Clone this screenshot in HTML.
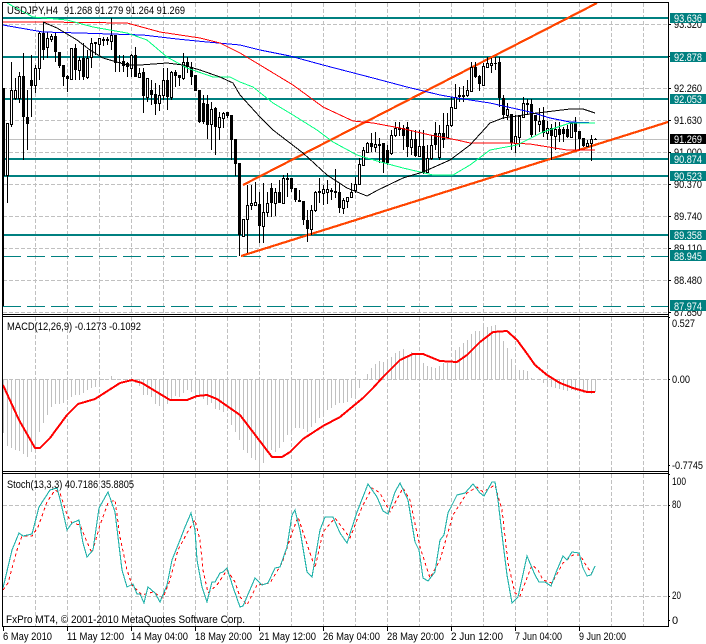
<!DOCTYPE html>
<html><head><meta charset="utf-8"><title>USDJPY,H4</title>
<style>
html,body{margin:0;padding:0;background:#fff;width:706px;height:644px;overflow:hidden}
svg{display:block}
text{font-family:"Liberation Sans",sans-serif;font-size:11px;fill:#000}
.c{shape-rendering:crispEdges}
</style></head><body>
<svg width="706" height="644" viewBox="0 0 706 644" xmlns="http://www.w3.org/2000/svg">
<rect width="706" height="644" fill="#fff"/>
<g class="c" fill="none">
<!-- grid -->
<path stroke="#c0c0c0" stroke-dasharray="4 2" d="M35.5 3V314M67.5 3V314M99.5 3V314M131.5 3V314M163.5 3V314M195.5 3V314M227.5 3V314M259.5 3V314M291.5 3V314M323.5 3V314M355.5 3V314M387.5 3V314M419.5 3V314M451.5 3V314M483.5 3V314M515.5 3V314M547.5 3V314M579.5 3V314M611.5 3V314M643.5 3V314
M35.5 317V471M67.5 317V471M99.5 317V471M131.5 317V471M163.5 317V471M195.5 317V471M227.5 317V471M259.5 317V471M291.5 317V471M323.5 317V471M355.5 317V471M387.5 317V471M419.5 317V471M451.5 317V471M483.5 317V471M515.5 317V471M547.5 317V471M579.5 317V471M611.5 317V471M643.5 317V471
M35.5 474V626M67.5 474V626M99.5 474V626M131.5 474V626M163.5 474V626M195.5 474V626M227.5 474V626M259.5 474V626M291.5 474V626M323.5 474V626M355.5 474V626M387.5 474V626M419.5 474V626M451.5 474V626M483.5 474V626M515.5 474V626M547.5 474V626M579.5 474V626M611.5 474V626M643.5 474V626
M3 24.5H668M3 56.5H668M3 88.5H668M3 120.5H668M3 152.5H668M3 184.5H668M3 216.5H668M3 248.5H668M3 280.5H668M3 312.5H668M3 379.5H668M3 505.5H668M3 596.5H668"/>
<path stroke="#c0c0c0" d="M3 139.5H668"/>
<!-- horizontal objects -->
<path stroke="#008080" stroke-width="2" d="M3 18H668M3 57H668M3 99H668M3 159H668M3 176H668M3 235H668"/>
<path stroke="#008080" stroke-dasharray="18 6" d="M3 256.5H668M3 306.5H668"/>
<!-- trend lines -->
<path stroke="#ff4500" stroke-width="2.2" d="M243 185L597 3M241 256L668 122"/>
<!-- wicks -->
<path stroke="#000" d="M3.5 88V306M7.5 123V203M11.5 62V127M15.5 78V100M19.5 72V103M23.5 53V160M27.5 90V150M31.5 55V117M35.5 65V93M39.5 32V80M43.5 22V60M47.5 32V58M51.5 34V42M55.5 32V62M59.5 52V68M63.5 65V86M67.5 75V92M71.5 48V80M75.5 44V80M79.5 57V80M83.5 43V80M87.5 50V79M91.5 38V68M95.5 42V55M99.5 38V55M103.5 37V46M107.5 37V45M111.5 18V50M115.5 35V72M119.5 55V72M123.5 55V72M127.5 62V77M131.5 54V77M135.5 47V77M139.5 68V78M143.5 68V113M147.5 78V102M151.5 80V105M155.5 83V115M159.5 85V111M163.5 68V100M167.5 68V110M171.5 71V100M175.5 70V87M179.5 75V86M183.5 53V80M187.5 57V73M191.5 62V85M195.5 75V91M199.5 90V123M203.5 95V124M207.5 95V139M211.5 102V150M215.5 107V155M219.5 112V140M223.5 112V128M227.5 112V118M231.5 115V160M235.5 139V176M239.5 163V256M243.5 219V237M247.5 185V253M251.5 185V210M255.5 182V205M259.5 192V243M263.5 183V243M267.5 192V217M271.5 183V217M275.5 188V216M279.5 180V203M283.5 175V203M287.5 173V197M291.5 178V192M295.5 188V202M299.5 190V202M303.5 201V225M307.5 210V242M311.5 205V235M315.5 191V212M319.5 178V203M323.5 185V205M327.5 180V204M331.5 188V200M335.5 169V198M339.5 183V213M343.5 198V214M347.5 197V208M351.5 183V198M355.5 177V193M359.5 158V185M363.5 147V165M367.5 142V152M371.5 133V152M375.5 132V152M379.5 138V163M383.5 143V173M387.5 145V165M391.5 130V155M395.5 122V137M399.5 122V136M403.5 125V150M407.5 122V157M411.5 130V155M415.5 130V157M419.5 130V157M423.5 130V174M427.5 145V172M431.5 135V160M435.5 122V150M439.5 125V160M443.5 113V148M447.5 113V137M451.5 97V127M455.5 84V108M459.5 87V102M463.5 86V102M467.5 80V97M471.5 62V92M475.5 62V78M479.5 75V91M483.5 63V85M487.5 57V68M491.5 58V73M495.5 57V70M499.5 57V107M503.5 95V119M507.5 103V120M511.5 114V150M515.5 115V153M519.5 115V147M523.5 97V118M527.5 99V115M531.5 99V137M535.5 115V135M539.5 108V132M543.5 107V137M547.5 121V140M551.5 124V160M555.5 122V150M559.5 122V142M563.5 127V142M567.5 125V138M571.5 122V138M575.5 117V150M579.5 131V150M583.5 138V147M587.5 140V147M591.5 135V161M595.5 138V140"/>
<!-- black bodies -->
<path fill="#000" d="M2 88h3V176h-3zM22 76h3V117h-3zM26 117h3V124h-3zM30 80h3V86h-3zM42 33h3V50h-3zM54 36h3V52h-3zM58 52h3V66h-3zM62 65h3V77h-3zM66 76h3V79h-3zM74 48h3V70h-3zM82 58h3V77h-3zM94 42h3V44h-3zM114 35h3V63h-3zM118 62h3V63h-3zM122 61h3V66h-3zM126 63h3V67h-3zM134 55h3V77h-3zM142 72h3V96h-3zM150 90h3V95h-3zM154 94h3V104h-3zM166 80h3V97h-3zM174 72h3V76h-3zM178 75h3V78h-3zM186 62h3V67h-3zM190 67h3V77h-3zM194 75h3V91h-3zM198 90h3V122h-3zM202 103h3V122h-3zM206 104h3V125h-3zM214 108h3V127h-3zM226 112h3V116h-3zM230 115h3V140h-3zM234 139h3V164h-3zM238 163h3V235h-3zM258 204h3V226h-3zM270 188h3V203h-3zM278 192h3V203h-3zM290 178h3V189h-3zM294 188h3V200h-3zM298 200h3V202h-3zM302 201h3V220h-3zM306 220h3V229h-3zM330 190h3V192h-3zM338 192h3V208h-3zM370 143h3V147h-3zM382 143h3V163h-3zM386 150h3V163h-3zM402 128h3V136h-3zM406 127h3V147h-3zM414 139h3V156h-3zM422 146h3V173h-3zM434 133h3V145h-3zM442 133h3V140h-3zM458 95h3V97h-3zM462 95h3V97h-3zM474 67h3V77h-3zM478 76h3V84h-3zM494 63h3V64h-3zM498 62h3V98h-3zM502 98h3V115h-3zM510 114h3V143h-3zM526 103h3V105h-3zM530 104h3V135h-3zM534 115h3V121h-3zM542 120h3V133h-3zM550 128h3V136h-3zM558 129h3V135h-3zM562 129h3V134h-3zM566 129h3V137h-3zM574 123h3V132h-3zM578 131h3V139h-3zM582 138h3V146h-3zM594 139h3V140h-3z"/>
<!-- white bodies -->
<path fill="#fff" stroke="#000" d="M6.5 123.5h2V175.5h-2zM10.5 90.5h2V124.5h-2zM14.5 90.5h2V98.5h-2zM18.5 76.5h2V98.5h-2zM34.5 68.5h2V85.5h-2zM38.5 33.5h2V68.5h-2zM46.5 38.5h2V47.5h-2zM50.5 36.5h2V39.5h-2zM70.5 48.5h2V79.5h-2zM78.5 60.5h2V70.5h-2zM86.5 58.5h2V77.5h-2zM90.5 43.5h2V57.5h-2zM98.5 38.5h2V44.5h-2zM102.5 39.5h2V40.5h-2zM106.5 39.5h2V40.5h-2zM110.5 35.5h2V41.5h-2zM130.5 55.5h2V68.5h-2zM138.5 73.5h2V77.5h-2zM146.5 78.5h2V97.5h-2zM158.5 95.5h2V103.5h-2zM162.5 80.5h2V95.5h-2zM170.5 72.5h2V97.5h-2zM182.5 62.5h2V78.5h-2zM210.5 109.5h2V124.5h-2zM218.5 117.5h2V127.5h-2zM222.5 113.5h2V118.5h-2zM242.5 219.5h2V236.5h-2zM246.5 205.5h2V219.5h-2zM250.5 203.5h2V205.5h-2zM254.5 202.5h2V205.5h-2zM262.5 212.5h2V226.5h-2zM266.5 203.5h2V212.5h-2zM274.5 192.5h2V203.5h-2zM282.5 178.5h2V203.5h-2zM286.5 178.5h2V179.5h-2zM310.5 210.5h2V229.5h-2zM314.5 192.5h2V210.5h-2zM318.5 191.5h2V192.5h-2zM322.5 189.5h2V193.5h-2zM326.5 189.5h2V192.5h-2zM334.5 191.5h2V192.5h-2zM342.5 200.5h2V208.5h-2zM346.5 197.5h2V201.5h-2zM350.5 192.5h2V197.5h-2zM354.5 184.5h2V190.5h-2zM358.5 164.5h2V184.5h-2zM362.5 150.5h2V165.5h-2zM366.5 143.5h2V152.5h-2zM374.5 144.5h2V147.5h-2zM378.5 144.5h2V145.5h-2zM390.5 135.5h2V153.5h-2zM394.5 128.5h2V135.5h-2zM398.5 128.5h2V129.5h-2zM410.5 139.5h2V147.5h-2zM418.5 146.5h2V156.5h-2zM426.5 158.5h2V172.5h-2zM430.5 145.5h2V158.5h-2zM438.5 133.5h2V157.5h-2zM446.5 125.5h2V137.5h-2zM450.5 107.5h2V125.5h-2zM454.5 97.5h2V108.5h-2zM466.5 90.5h2V95.5h-2zM470.5 67.5h2V91.5h-2zM482.5 66.5h2V85.5h-2zM486.5 63.5h2V67.5h-2zM490.5 63.5h2V65.5h-2zM506.5 109.5h2V115.5h-2zM514.5 136.5h2V143.5h-2zM518.5 116.5h2V137.5h-2zM522.5 103.5h2V117.5h-2zM538.5 121.5h2V124.5h-2zM546.5 128.5h2V133.5h-2zM554.5 129.5h2V136.5h-2zM570.5 123.5h2V137.5h-2zM586.5 143.5h2V146.5h-2zM590.5 139.5h2V143.5h-2z"/>
<!-- moving averages -->
<polyline stroke="#0000ff" points="3,25 20,28 43,32 80,33 110,34 143,35 177,39 207,42 240,45 260,50 290,56 323,65 373,78 407,87 440,95 457,98 470,100 490,103 530,112 550,118 570,122 595,123"/>
<polyline stroke="#ff0000" points="3,22 20,22 43,22 127,23 160,32 200,38 220,43 240,53 260,65 293,85 323,107 353,121 373,123 400,128 430,135 457,140 470,143 510,143 530,144 567,150 595,150"/>
<polyline stroke="#00ff7f" points="7,3 33,17 67,20 93,27 127,33 147,40 167,57 187,68 213,77 230,77 240,82 253,87 273,103 293,115 317,130 333,142 357,155 377,161 403,168 433,175 453,175 470,165 490,150 517,145 543,132 570,123 595,123"/>
<polyline stroke="#000" points="43,22 57,28 77,40 90,50 103,58 127,65 140,65 167,63 183,65 200,70 220,77 233,83 240,95 260,117 273,130 303,153 327,175 347,188 367,196 378,190 403,178 423,172 450,160 470,145 490,123 503,118 537,113 570,109 583,109 595,113"/>
<!-- MACD histogram -->
<path stroke="#c0c0c0" d="M3.5 379V433M7.5 379V446M11.5 379V448M15.5 379V450M19.5 379V451M23.5 379V454M27.5 379V457M31.5 379V452M35.5 379V445M39.5 379V432M43.5 379V423M47.5 379V415M51.5 379V407M55.5 379V404M59.5 379V404M63.5 379V403M67.5 379V400M71.5 379V397M75.5 379V395M79.5 379V395M83.5 379V393M87.5 379V390M91.5 379V388M95.5 379V387M99.5 379V384M103.5 379V380M107.5 379V380M111.5 376V380M115.5 379V380M119.5 379V380M123.5 379V380M127.5 379V380M131.5 379V382M135.5 379V383M139.5 379V386M143.5 379V395M147.5 379V395M151.5 379V397M155.5 379V404M159.5 379V406M163.5 379V407M167.5 379V404M171.5 379V401M175.5 379V396M179.5 379V397M183.5 379V393M187.5 379V390M191.5 379V392M195.5 379V395M199.5 379V397M203.5 379V399M207.5 379V405M211.5 379V403M215.5 379V409M219.5 379V410M223.5 379V412M227.5 379V410M231.5 379V425M235.5 379V432M239.5 379V440M243.5 379V450M247.5 379V453M251.5 379V458M255.5 379V460M259.5 379V467M263.5 379V463M267.5 379V453M271.5 379V450M275.5 379V452M279.5 379V448M283.5 379V442M287.5 379V435M291.5 379V432M295.5 379V428M299.5 379V428M303.5 379V429M307.5 379V432M311.5 379V427M315.5 379V423M319.5 379V418M323.5 379V417M327.5 379V410M331.5 379V408M335.5 379V405M339.5 379V403M343.5 379V403M347.5 379V402M351.5 379V398M355.5 379V395M359.5 379V388M363.5 379V380M367.5 374V380M371.5 368V380M375.5 364V380M379.5 361V380M383.5 362V380M387.5 362V380M391.5 357V380M395.5 353V380M399.5 351V380M403.5 349V380M407.5 355V380M411.5 352V380M415.5 353V380M419.5 355V380M423.5 363V380M427.5 366V380M431.5 367V380M435.5 368V380M439.5 366V380M443.5 363V380M447.5 363V380M451.5 363V380M455.5 350V380M459.5 347V380M463.5 343V380M467.5 340V380M471.5 334V380M475.5 331V380M479.5 331V380M483.5 327V380M487.5 327V380M491.5 326V380M495.5 325V380M499.5 332V380M503.5 341V380M507.5 348V380M511.5 359V380M515.5 365V380M519.5 370V380M523.5 370V380M527.5 371V380M531.5 378V380M539.5 379V380M543.5 379V383M547.5 379V385M551.5 379V387M555.5 379V388M559.5 379V389M563.5 379V390M567.5 379V391M571.5 379V390M575.5 379V391M579.5 379V392M583.5 379V393M587.5 379V393M591.5 379V394M595.5 379V392"/>
<polyline stroke="#ff0000" stroke-width="2" points="3,385 19,420 35,448 40,448 50,438 67,415 78,404 95,399 120,383 132,380 142,383 170,400 187,400 197,396 207,395 217,399 240,415 272,457 282,457 290,452 303,439 323,426 340,417 363,398 373,388 383,377 400,360 413,354 423,354 440,361 457,362 467,355 480,342 493,332 507,331 517,340 528,355 535,365 547,375 560,383 573,388 587,392 595,392"/>
<!-- Stochastic -->
<polyline stroke="#ff0000" stroke-dasharray="3 3" points="3,590 8,583 17,550 22,536 32,536 38,527 47,502 55,490 60,493 67,515 72,523 80,525 87,542 92,553 100,525 108,503 115,500 120,537 127,570 132,585 142,595 153,592 163,598 170,580 178,550 187,533 195,520 200,540 203,570 208,593 217,585 227,570 235,582 240,597 247,605 257,585 270,583 282,563 292,533 298,517 305,538 315,568 323,532 335,518 350,538 362,507 372,488 380,493 390,512 403,488 410,500 420,547 430,578 440,560 453,515 467,493 477,487 483,492 495,485 502,510 508,563 515,593 520,596 532,565 538,570 543,580 552,583 563,563 573,555 580,555 587,567 592,573"/>
<polyline stroke="#20b2aa" stroke-width="1.1" points="3,588 12,550 19,533 23,536 32,534 39,507 50,490 57,488 61,503 67,530 72,523 79,520 83,543 87,557 93,550 99,508 108,492 115,512 122,570 127,587 133,584 137,594 140,594 144,603 148,587 155,593 160,602 167,585 172,560 180,540 185,527 191,513 195,530 197,560 202,587 207,602 212,582 215,582 220,573 223,572 227,568 233,587 240,607 243,606 255,578 262,585 268,583 275,568 280,567 287,547 292,515 295,510 300,530 307,572 312,577 320,530 325,517 333,517 340,533 347,543 357,512 368,484 377,497 383,511 388,514 395,492 400,483 408,500 415,542 419,550 423,578 428,581 435,572 440,540 444,535 448,513 457,495 465,493 473,484 480,493 484,496 492,482 495,482 498,500 503,543 507,575 512,603 518,597 527,556 535,575 539,582 545,582 551,586 557,570 563,556 567,560 572,552 579,553 583,568 587,576 591,575 595,566"/>
<!-- frames -->
<path stroke="#000" d="M2 2.5H669M2.5 2V627M668.5 2V627M2 314.5H669M2 316.5H669M2 471.5H669M2 473.5H669M2 626.5H669
M668 24.5h3M668 56.5h3M668 88.5h3M668 120.5h3M668 152.5h3M668 184.5h3M668 216.5h3M668 248.5h3M668 280.5h3M668 312.5h3M668 317.5h2M668 379.5h2M668 465.5h2M668 474.5h2M668 505.5h2M668 596.5h2M668 620.5h2
M3.5 627v4M67.5 627v4M131.5 627v4M195.5 627v4M259.5 627v4M323.5 627v4M387.5 627v4M451.5 627v4M515.5 627v4M579.5 627v4"/>
</g>
<!-- scale text -->
<g>
<text x="674" y="28" textLength="28" lengthAdjust="spacingAndGlyphs">93.320</text>
<text x="674" y="92" textLength="28" lengthAdjust="spacingAndGlyphs">92.260</text>
<text x="674" y="124" textLength="28" lengthAdjust="spacingAndGlyphs">91.630</text>
<text x="674" y="156" textLength="28" lengthAdjust="spacingAndGlyphs">91.000</text>
<text x="674" y="188" textLength="28" lengthAdjust="spacingAndGlyphs">90.370</text>
<text x="674" y="220" textLength="28" lengthAdjust="spacingAndGlyphs">89.740</text>
<text x="674" y="252" textLength="28" lengthAdjust="spacingAndGlyphs">89.110</text>
<text x="674" y="284" textLength="28" lengthAdjust="spacingAndGlyphs">88.480</text>
<text x="674" y="316" textLength="28" lengthAdjust="spacingAndGlyphs">87.850</text>
<text x="672" y="327" textLength="23" lengthAdjust="spacingAndGlyphs">0.527</text>
<text x="672" y="383" textLength="18" lengthAdjust="spacingAndGlyphs">0.00</text>
<text x="672" y="469" textLength="31" lengthAdjust="spacingAndGlyphs">-0.7745</text>
<text x="672" y="485" textLength="14" lengthAdjust="spacingAndGlyphs">100</text>
<text x="672" y="508" textLength="9" lengthAdjust="spacingAndGlyphs">80</text>
<text x="672" y="599" textLength="9" lengthAdjust="spacingAndGlyphs">20</text>
<text x="672" y="624">0</text>
</g>
<g class="c" fill="#008080">
<rect x="670" y="13" width="36" height="10"/>
<rect x="670" y="52" width="36" height="10"/>
<rect x="670" y="94" width="36" height="10"/>
<rect x="670" y="153" width="36" height="11"/>
<rect x="670" y="171" width="36" height="10"/>
<rect x="670" y="230" width="36" height="10"/>
<rect x="670" y="250" width="36" height="11"/>
<rect x="670" y="300" width="36" height="11"/>
<rect x="670" y="134" width="36" height="10" fill="#000"/>
</g>
<g>
<text style="fill:#fff" x="674" y="22" textLength="28" lengthAdjust="spacingAndGlyphs">93.636</text>
<text style="fill:#fff" x="674" y="61" textLength="28" lengthAdjust="spacingAndGlyphs">92.878</text>
<text style="fill:#fff" x="674" y="103" textLength="28" lengthAdjust="spacingAndGlyphs">92.053</text>
<text style="fill:#fff" x="674" y="143" textLength="28" lengthAdjust="spacingAndGlyphs">91.269</text>
<text style="fill:#fff" x="674" y="163" textLength="28" lengthAdjust="spacingAndGlyphs">90.874</text>
<text style="fill:#fff" x="674" y="180" textLength="28" lengthAdjust="spacingAndGlyphs">90.523</text>
<text style="fill:#fff" x="674" y="239" textLength="28" lengthAdjust="spacingAndGlyphs">89.358</text>
<text style="fill:#fff" x="674" y="260" textLength="28" lengthAdjust="spacingAndGlyphs">88.945</text>
<text style="fill:#fff" x="674" y="310" textLength="28" lengthAdjust="spacingAndGlyphs">87.974</text>
</g>
<!-- labels -->
<text x="7" y="14" textLength="51" lengthAdjust="spacingAndGlyphs">USDJPY,H4</text>
<text x="64" y="14" textLength="121" lengthAdjust="spacingAndGlyphs">91.268 91.279 91.264 91.269</text>
<text x="7" y="330" textLength="134" lengthAdjust="spacingAndGlyphs">MACD(12,26,9) -0.1273 -0.1092</text>
<text x="7" y="488" textLength="127" lengthAdjust="spacingAndGlyphs">Stoch(13,3,3) 40.7186 35.8805</text>
<text x="6" y="623" textLength="239" lengthAdjust="spacingAndGlyphs">FxPro MT4, © 2001-2010 MetaQuotes Software Corp.</text>
<!-- time axis -->
<text x="3" y="640" textLength="49" lengthAdjust="spacingAndGlyphs">6 May 2010</text>
<text x="67" y="640" textLength="57" lengthAdjust="spacingAndGlyphs">11 May 12:00</text>
<text x="131" y="640" textLength="57" lengthAdjust="spacingAndGlyphs">14 May 04:00</text>
<text x="195" y="640" textLength="57" lengthAdjust="spacingAndGlyphs">18 May 20:00</text>
<text x="259" y="640" textLength="57" lengthAdjust="spacingAndGlyphs">21 May 12:00</text>
<text x="323" y="640" textLength="57" lengthAdjust="spacingAndGlyphs">26 May 04:00</text>
<text x="387" y="640" textLength="57" lengthAdjust="spacingAndGlyphs">28 May 20:00</text>
<text x="451" y="640" textLength="52" lengthAdjust="spacingAndGlyphs">2 Jun 12:00</text>
<text x="515" y="640" textLength="47" lengthAdjust="spacingAndGlyphs">7 Jun 04:00</text>
<text x="579" y="640" textLength="47" lengthAdjust="spacingAndGlyphs">9 Jun 20:00</text>
</svg>
</body></html>
